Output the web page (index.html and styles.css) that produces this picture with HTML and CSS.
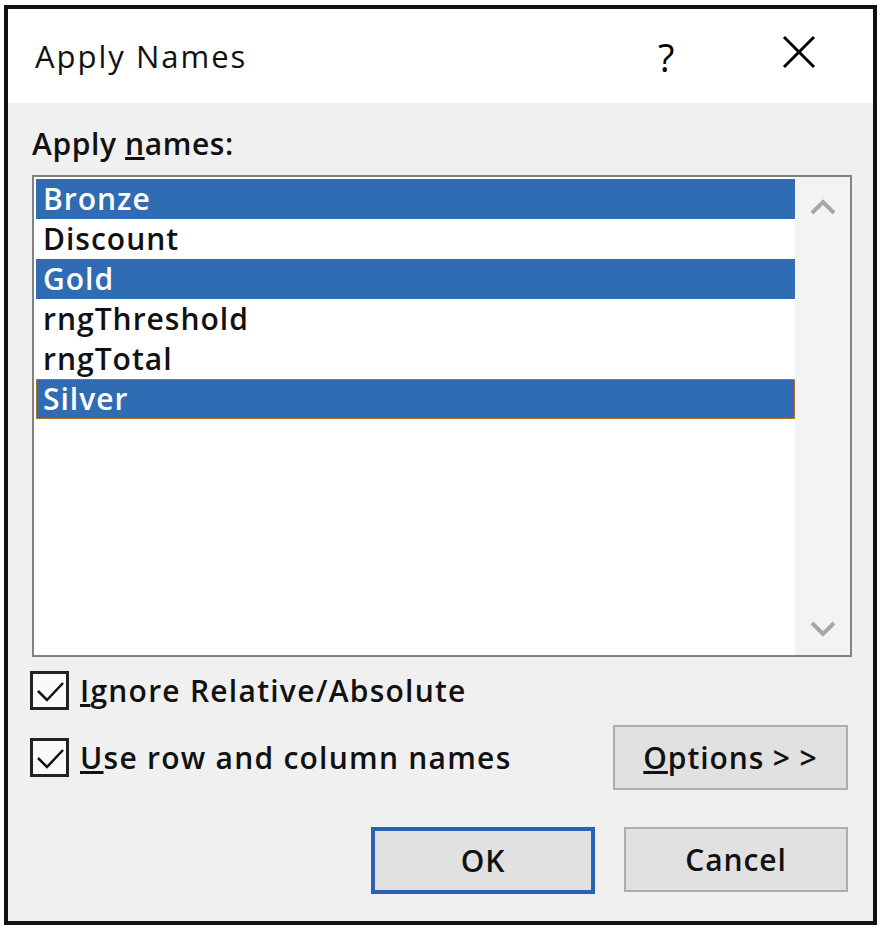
FILE: index.html
```html
<!DOCTYPE html>
<html>
<head>
<meta charset="utf-8">
<link rel="stylesheet" href="styles.css">
</head>
<body>
<div class="dialog">
  <div class="titlebar">
    <div class="title">Apply Names</div>
    <div class="help">?</div>
    <div class="close">
      <svg width="34" height="34" viewBox="0 0 34 34"><path d="M2 2 L32 32 M32 2 L2 32" stroke="#000" stroke-width="3" fill="none"/></svg>
    </div>
  </div>
  <div class="body">
    <div class="label">Apply <u>n</u>ames:</div>
    <div class="listbox">
      <div class="items">
        <div class="item sel">Bronze</div>
        <div class="item">Discount</div>
        <div class="item sel">Gold</div>
        <div class="item">rngThreshold</div>
        <div class="item">rngTotal</div>
        <div class="item sel focus">Silver</div>
      </div>
      <div class="scrollbar">
        <svg class="arrow" width="26" height="16" viewBox="0 0 26 16"><path d="M2 14 L13 3 L24 14" stroke="#a6a6a6" stroke-width="4" fill="none"/></svg>
        <svg class="arrow" width="26" height="16" viewBox="0 0 26 16"><path d="M2 2 L13 13 L24 2" stroke="#a6a6a6" stroke-width="4" fill="none"/></svg>
      </div>
    </div>
    <div class="check-row first">
      <span class="checkbox"><svg width="32" height="32" viewBox="0 0 32 32"><path d="M4 17 L13 26 L29 9" stroke="#111" stroke-width="2.5" fill="none"/></svg></span>
      <span class="check-label"><u>I</u>gnore Relative/Absolute</span>
    </div>
    <div class="check-row second">
      <span class="checkbox"><svg width="32" height="32" viewBox="0 0 32 32"><path d="M4 17 L13 26 L29 9" stroke="#111" stroke-width="2.5" fill="none"/></svg></span>
      <span class="check-label"><u>U</u>se row and column names</span>
      <button class="btn options"><u>O</u>ptions &gt; &gt;</button>
    </div>
    <div class="buttons">
      <button class="btn ok">OK</button>
      <button class="btn cancel">Cancel</button>
    </div>
  </div>
</div>
</body>
</html>
```

FILE: styles.css
```css
html, body {
  margin: 0;
  padding: 0;
  background: #fff;
}
body {
  font-family: "Open Sans", "Noto Sans", sans-serif;
  color: #000;
}
.dialog {
  margin: 5px 0 0 4px;
  width: 873px;
  height: 920px;
  box-sizing: border-box;
  border: 4px solid #111;
  display: flex;
  flex-direction: column;
}
.titlebar {
  height: 94px;
  background: #fff;
  display: flex;
  align-items: flex-start;
  flex: none;
}
.title {
  font-size: 31px;
  line-height: 40px;
  font-weight: 500;
  letter-spacing: 2px;
  padding: 27px 0 0 27px;
  flex: 1;
  color: #111;
}
.help {
  font-size: 38px;
  line-height: 40px;
  font-weight: 500;
  padding-top: 28px;
  width: 124px;
  font-family: "Open Sans", sans-serif;
}
.close {
  padding: 26px 57px 0 0;
}
.body {
  flex: 1;
  background: #f0f0f0;
  padding: 0 21px 0 24px;
  display: flex;
  flex-direction: column;
}
.label {
  font-size: 30px;
  line-height: 40px;
  font-weight: 600;
  letter-spacing: 0.6px;
  margin-top: 21px;
  color: #111;
}
.listbox {
  margin-top: 11px;
  height: 482px;
  box-sizing: border-box;
  border: 2px solid #828282;
  background: #fff;
  display: flex;
}
.items {
  flex: 1;
  padding: 2px 0 0 2px;
}
.item {
  height: 40px;
  line-height: 40px;
  font-size: 30px;
  font-weight: 600;
  letter-spacing: 1px;
  padding-left: 7px;
  box-sizing: border-box;
  color: #111;
}
.item.sel {
  background: #2f6cb4;
  color: #fff;
}
.item.focus {
  outline: 1px dotted #c98b3a;
  outline-offset: -1px;
}
.scrollbar {
  width: 55px;
  background: #f3f3f3;
  display: flex;
  flex-direction: column;
  justify-content: space-between;
  align-items: center;
  padding: 22px 0 18px;
  box-sizing: border-box;
}
.check-row {
  display: flex;
  align-items: center;
  font-size: 30px;
  font-weight: 600;
  letter-spacing: 1.25px;
  color: #111;
}
.check-row.first {
  margin-top: 12px;
  height: 42px;
}
.check-row.second {
  margin-top: 13px;
  height: 66px;
}
.checkbox {
  width: 39px;
  height: 39px;
  box-sizing: border-box;
  border: 3px solid #222;
  background: #fafafa;
  display: flex;
  align-items: center;
  justify-content: center;
  margin-left: -2px;
  margin-right: 11px;
}
.check-label {
  flex: 1;
}
.btn {
  font-family: "Open Sans", "Noto Sans", sans-serif;
  font-size: 30px;
  font-weight: 600;
  letter-spacing: 0.9px;
  color: #111;
  background: #e1e1e1;
  border: 2px solid #adadad;
  box-sizing: border-box;
  padding: 0;
  margin: 0;
}
.options {
  width: 235px;
  height: 65px;
  margin-right: 4px;
}
.buttons {
  display: flex;
  justify-content: flex-end;
  gap: 29px;
  margin-top: 37px;
  padding-right: 4px;
}
.ok {
  width: 224px;
  height: 67px;
  border: 4px solid #2a62b6;
}
.cancel {
  width: 224px;
  height: 65px;
}
```
